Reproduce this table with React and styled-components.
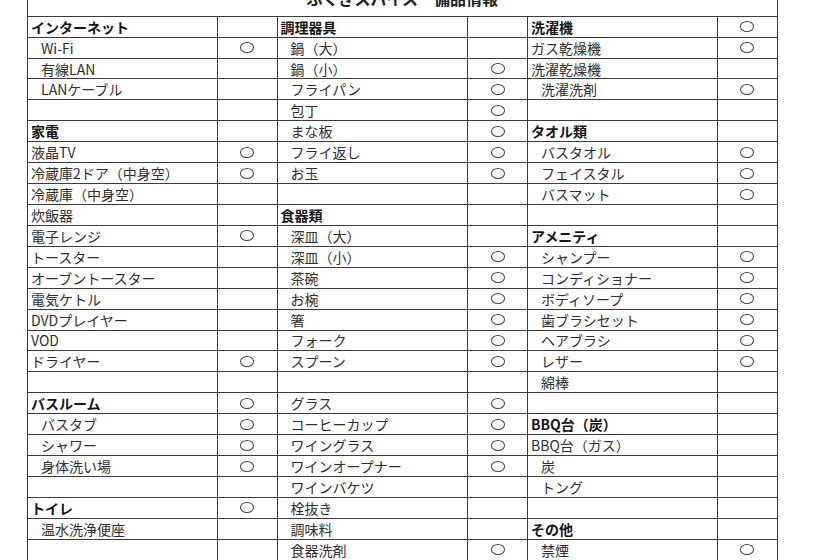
import React from "react";
import styled, { createGlobalStyle } from "styled-components";

const GlobalStyle = createGlobalStyle`
  html, body {
    margin: 0;
    padding: 0;
    background: #ffffff;
  }
  body {
    font-family: "Noto Sans CJK JP", "Noto Sans", sans-serif;
    color: #2a2a2a;
    overflow: hidden;
  }
`;

const Page = styled.div`
  width: 820px;
  height: 560px;
  overflow: hidden;
`;

const Sheet = styled.div`
  margin-left: 27px;
  margin-top: -22.7px;
  width: 750.5px;
  border-left: 1px solid #3c3c3c;
  border-right: 1px solid #3c3c3c;
  box-sizing: border-box;
`;

const TitleRow = styled.div`
  height: 39.4px;
  display: flex;
  align-items: center;
  justify-content: center;
  border-bottom: 1px solid #3c3c3c;
  box-sizing: border-box;
  font-size: 16px;
  font-weight: 700;
  color: #222;
  padding-top: 2px;
`;

const Grid = styled.div`
  display: grid;
  grid-template-columns: 190px 59.5px 190.5px 60px 189.5px 59.5px;
  grid-auto-rows: 20.93px;
`;

const NameCell = styled.div`
  box-sizing: border-box;
  border-right: 1px solid #3c3c3c;
  border-bottom: 1px solid #3c3c3c;
  display: flex;
  align-items: center;
  padding-left: ${(p) => (p.$indent ? "13px" : "3px")};
  font-size: 14px;
  line-height: 1;
  white-space: nowrap;
  overflow: hidden;
  font-weight: ${(p) => (p.$bold ? 700 : 400)};
  color: ${(p) => (p.$bold ? "#151515" : "#303030")};
`;

const MarkCell = styled.div`
  box-sizing: border-box;
  border-right: ${(p) => (p.$last ? "none" : "1px solid #3c3c3c")};
  border-bottom: 1px solid #3c3c3c;
  display: flex;
  align-items: center;
  justify-content: center;
`;

const Mark = styled.span`
  display: block;
  width: 14px;
  height: 11px;
  border: 1.2px solid #444;
  border-radius: 50%;
  box-sizing: border-box;
`;

// [label, kind, mark]  kind: "h" heading, "i" indented, "" plain
const col1 = [
  ["インターネット", "h", 0],
  ["Wi-Fi", "i", 1],
  ["有線LAN", "i", 0],
  ["LANケーブル", "i", 0],
  ["", "", 0],
  ["家電", "h", 0],
  ["液晶TV", "", 1],
  ["冷蔵庫2ドア（中身空）", "", 1],
  ["冷蔵庫（中身空）", "", 0],
  ["炊飯器", "", 0],
  ["電子レンジ", "", 1],
  ["トースター", "", 0],
  ["オーブントースター", "", 0],
  ["電気ケトル", "", 0],
  ["DVDプレイヤー", "", 0],
  ["VOD", "", 0],
  ["ドライヤー", "", 1],
  ["", "", 0],
  ["バスルーム", "h", 1],
  ["バスタブ", "i", 1],
  ["シャワー", "i", 1],
  ["身体洗い場", "i", 1],
  ["", "", 0],
  ["トイレ", "h", 1],
  ["温水洗浄便座", "i", 0],
  ["", "", 0],
];

const col2 = [
  ["調理器具", "h", 0],
  ["鍋（大）", "i", 0],
  ["鍋（小）", "i", 1],
  ["フライパン", "i", 1],
  ["包丁", "i", 1],
  ["まな板", "i", 1],
  ["フライ返し", "i", 1],
  ["お玉", "i", 1],
  ["", "", 0],
  ["食器類", "h", 0],
  ["深皿（大）", "i", 0],
  ["深皿（小）", "i", 1],
  ["茶碗", "i", 1],
  ["お椀", "i", 1],
  ["箸", "i", 1],
  ["フォーク", "i", 1],
  ["スプーン", "i", 1],
  ["", "", 0],
  ["グラス", "i", 1],
  ["コーヒーカップ", "i", 1],
  ["ワイングラス", "i", 1],
  ["ワインオープナー", "i", 1],
  ["ワインバケツ", "i", 0],
  ["栓抜き", "i", 0],
  ["調味料", "i", 0],
  ["食器洗剤", "i", 1],
];

const col3 = [
  ["洗濯機", "h", 1],
  ["ガス乾燥機", "", 1],
  ["洗濯乾燥機", "", 0],
  ["洗濯洗剤", "i", 1],
  ["", "", 0],
  ["タオル類", "h", 0],
  ["バスタオル", "i", 1],
  ["フェイスタル", "i", 1],
  ["バスマット", "i", 1],
  ["", "", 0],
  ["アメニティ", "h", 0],
  ["シャンプー", "i", 1],
  ["コンディショナー", "i", 1],
  ["ボディソープ", "i", 1],
  ["歯ブラシセット", "i", 1],
  ["ヘアブラシ", "i", 1],
  ["レザー", "i", 1],
  ["綿棒", "i", 0],
  ["", "", 0],
  ["BBQ台（炭）", "h", 0],
  ["BBQ台（ガス）", "", 0],
  ["炭", "i", 0],
  ["トング", "i", 0],
  ["", "", 0],
  ["その他", "h", 0],
  ["禁煙", "i", 1],
];

const columns = [col1, col2, col3];

export default function App() {
  return (
    <Page>
      <GlobalStyle />
      <Sheet>
        <TitleRow>ふくぎスパイス　備品情報</TitleRow>
        <Grid>
          {col1.map((_, r) =>
            columns.map((col, c) => {
              const [label, kind, mark] = col[r];
              return (
                <React.Fragment key={`${r}-${c}`}>
                  <NameCell $bold={kind === "h"} $indent={kind === "i"}>
                    {label}
                  </NameCell>
                  <MarkCell $last={c === 2}>{mark ? <Mark /> : null}</MarkCell>
                </React.Fragment>
              );
            })
          )}
        </Grid>
      </Sheet>
    </Page>
  );
}
